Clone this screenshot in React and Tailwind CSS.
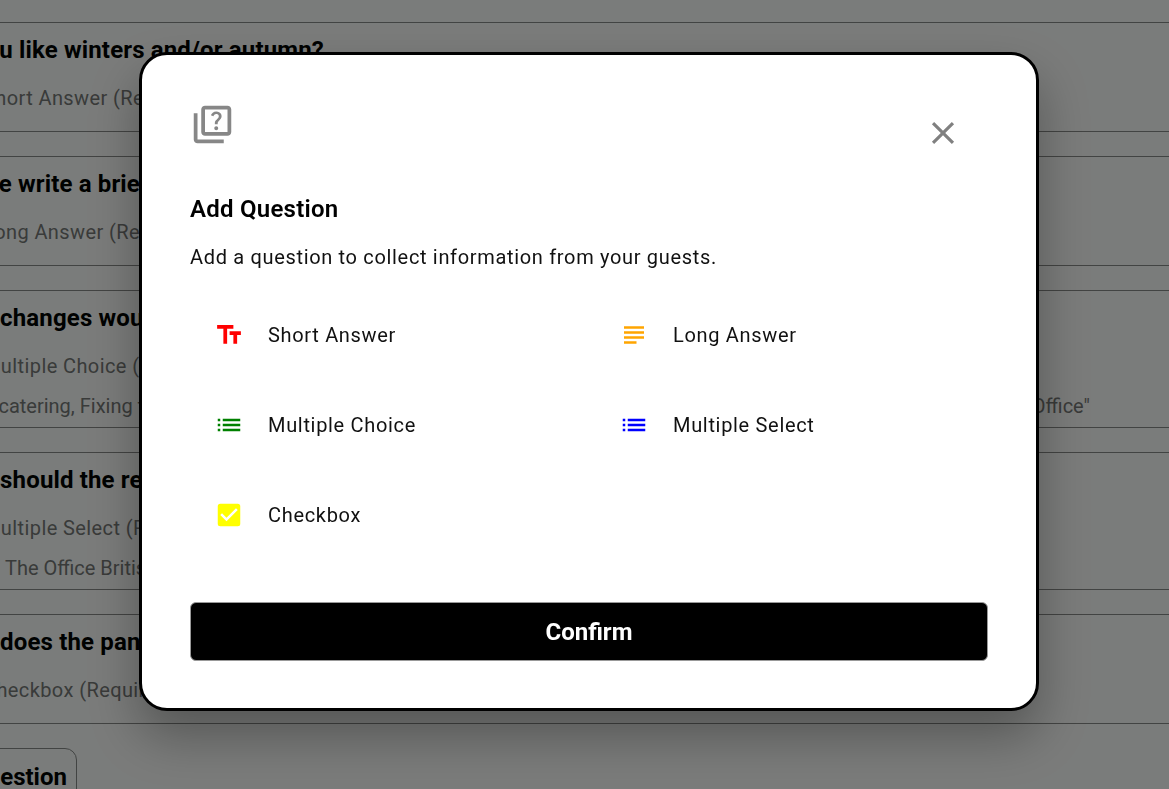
import React from "react";
import { MdOutlineQuiz, MdClose, MdTextFields, MdSubject, MdList, MdCheckBox } from "react-icons/md";

const rows = [
  { title: "Do you like winters and/or autumn?", sub: "Short Answer (Required)" },
  { title: "Please write a brief description of yourself", sub: "Long Answer (Required)" },
  { title: "What changes would you make to the office?", sub: "Multiple Choice (Required)", left: "\"More catering, Fixing the lights", leftOffset: "ml-[-59px]", right: "\"The Office\"" },
  { title: "What should the receptionist watch?", sub: "Multiple Select (Required)", left: "\" The Office British version", leftOffset: "ml-[-6px]", right: "" },
  { title: "What does the panel meet about?", sub: "Checkbox (Required)" },
];

const options = [
  { label: "Short Answer", Icon: MdTextFields, color: "text-[#ff0000]" },
  { label: "Long Answer", Icon: MdSubject, color: "text-[#ffa500]" },
  { label: "Multiple Choice", Icon: MdList, color: "text-[#008000]" },
  { label: "Multiple Select", Icon: MdList, color: "text-[#0000ff]" },
  { label: "Checkbox", Icon: MdCheckBox, color: "text-[#ffff00]" },
];

function Row({ row }) {
  const tall = row.left !== undefined;
  return (
    <div className={`border-y border-[#8a8a8a] mb-6 pt-[12px] flex flex-col ${tall ? "pb-[6px]" : "pb-[18px]"}`}>
      <div className="ml-[-62px] h-[30px] leading-[30px] text-[24px] font-bold text-black whitespace-nowrap tracking-[0.15px]">{row.title}</div>
      <div className="ml-[-17px] mt-[18px] h-[30px] leading-[30px] text-[20px] text-[#777] whitespace-nowrap tracking-[0.4px]">{row.sub}</div>
      {tall && (
        <div className="mt-[10px] h-[30px] leading-[30px] text-[20px] text-[#777] whitespace-nowrap flex justify-between pr-[79px]">
          <span className={row.leftOffset}>{row.left}</span>
          <span>{row.right}</span>
        </div>
      )}
    </div>
  );
}

export default function App() {
  return (
    <div className="relative h-screen overflow-hidden bg-white font-['Roboto',sans-serif]">
      <div className="pt-[22px]">
        {rows.map((r) => (
          <Row key={r.title} row={r} />
        ))}
        <div className="ml-[-95px] w-[172px] h-[58px] border border-[#8a8a8a] rounded-xl text-[24px] font-bold text-black flex items-center justify-center">
          <span className="ml-[6px]">Add Question</span>
        </div>
      </div>

      <div className="fixed inset-0 bg-[rgba(0,4,2,0.52)]">
        <div className="absolute left-[139px] top-[52px] w-[900px] h-[659px] bg-white border-[3px] border-black rounded-[28px] px-12 pt-[47px] shadow-[0_25px_50px_rgba(0,0,0,0.3)] flex flex-col">
          <div className="flex justify-between items-start">
            <MdOutlineQuiz size={45} className="text-[#878787]" />
            <MdClose size={38} className="text-[#808080] mt-[12px] mr-[26px]" />
          </div>
          <h2 className="mt-[41px] text-[24px] leading-[32px] font-semibold text-black tracking-[0.25px]">Add Question</h2>
          <p className="mt-[16px] text-[20px] leading-[32px] text-[#111] tracking-[0.67px]">
            Add a question to collect information from your guests.
          </p>
          <div className="mt-[29px] grid grid-cols-2 gap-x-3 gap-y-6">
            {options.map(({ label, Icon, color }) => (
              <div key={label} className="h-[66px] px-6 flex items-center gap-6">
                <Icon size={30} className={color} />
                <span className="text-[20px] text-[#111] tracking-[0.68px]">{label}</span>
              </div>
            ))}
          </div>
          <button className="mt-[54px] h-[59px] w-full bg-black border border-[#999] rounded-md text-white text-[24px] font-bold">
            Confirm
          </button>
        </div>
      </div>
    </div>
  );
}
